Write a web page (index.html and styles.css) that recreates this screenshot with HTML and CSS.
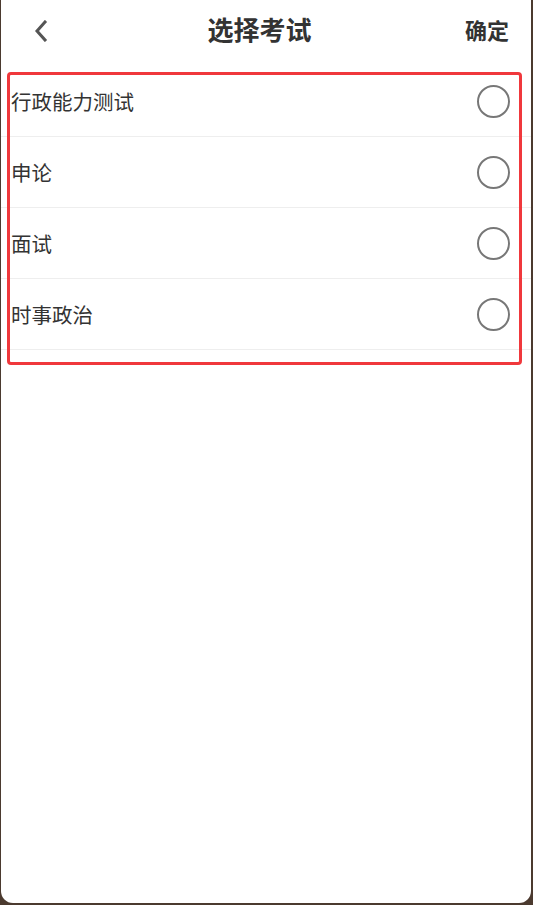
FILE: index.html
```html
<!DOCTYPE html>
<html lang="zh-CN">
<head>
    <meta charset="UTF-8">
    <meta name="viewport" content="width=device-width, initial-scale=1.0">
    <title>选择考试</title>
    <link rel="stylesheet" href="styles.css">
</head>
<body>
    <div class="screen">
        <header class="top-bar">
            <button class="back-btn" type="button" aria-label="返回">
                <svg width="14" height="22" viewBox="0 0 14 22">
                    <path d="M11 2 L3 11 L11 20" fill="none" stroke="#555" stroke-width="3" stroke-linecap="square"/>
                </svg>
            </button>
            <h1 class="title">选择考试</h1>
            <button class="confirm-btn" type="button">确定</button>
        </header>

        <ul class="exam-list">
            <li class="exam-item"><span>行政能力测试</span><i class="radio"></i></li>
            <li class="exam-item"><span>申论</span><i class="radio"></i></li>
            <li class="exam-item"><span>面试</span><i class="radio"></i></li>
            <li class="exam-item"><span>时事政治</span><i class="radio"></i></li>
        </ul>

        <!-- annotation frame drawn over the list -->
        <div class="highlight"></div>
    </div>
</body>
</html>
```

FILE: styles.css
```css
body {
    margin: 0;
    padding: 0;
    background-color: #4b3a2f;
    font-family: "Noto Sans CJK SC", "Noto Sans", sans-serif;
    color: #333;
}

.screen {
    position: relative;
    height: 903px;
    margin: 0 2px 0 1px;
    background-color: #fff;
    border-radius: 0 0 12px 12px;
    overflow: hidden;
}

.top-bar {
    height: 66px;
    display: flex;
    align-items: center;
    justify-content: space-between;
    padding: 0 22px 8px 33px;
    box-sizing: border-box;
}

.back-btn,
.confirm-btn {
    background: none;
    border: none;
    padding: 0;
    cursor: pointer;
    font-family: inherit;
}

.back-btn {
    width: 14px;
    height: 22px;
    display: flex;
    margin-top: 4px;
}

.title {
    margin: 0 0 0 6px;
    font-size: 26px;
    font-weight: bold;
    color: #333;
    line-height: 1;
}

.confirm-btn {
    font-size: 22px;
    font-weight: bold;
    color: #333;
    line-height: 1;
}

.exam-list {
    list-style: none;
    margin: 0;
    padding: 0;
}

.exam-item {
    height: 70px;
    border-bottom: 1px solid #eeeeee;
    display: flex;
    align-items: center;
    justify-content: space-between;
    padding: 0 21px 0 10px;
    font-size: 20.5px;
    color: #333;
}

.radio {
    width: 29px;
    height: 29px;
    border: 2.5px solid #777;
    border-radius: 50%;
}

.highlight {
    position: absolute;
    left: 6px;
    top: 72px;
    width: 509px;
    height: 287px;
    border: 3px solid #f0383c;
    border-radius: 4px;
}
```
